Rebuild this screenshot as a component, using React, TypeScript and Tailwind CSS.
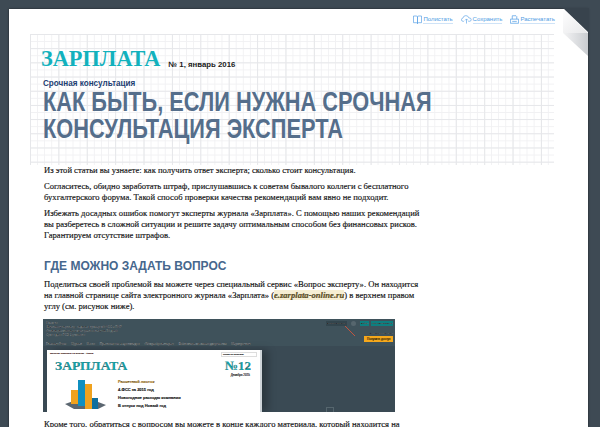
const serif = "font-['Liberation_Serif',serif]";

function BookIcon() {
  return (
    <svg width="9" height="9" viewBox="0 0 9 9" fill="none" stroke="#5aa2e6" strokeWidth="0.7">
      <path d="M0.5 1h2.800q1.200 0 1.200 1v6.500q0-.8-1.200-.8h-2.800zM8.500 1h-2.800q-1.200 0-1.200 1v6.500q0-.8 1.200-.8h2.800z" />
    </svg>
  );
}

function CloudIcon() {
  return (
    <svg width="11" height="9" viewBox="0 0 15 12" fill="none" stroke="#5aa2e6" strokeWidth="0.9">
      <path d="M4 8.500h-1q-2.400 0-2.400-2.200 0-2 2-2.200 0.600-3.400 4-3.400 3.200 0 4 3 3.300 0 3.300 2.500 0 2.300-2.400 2.300h-1.500" />
      <path d="M7.500 11.500v-6M5.500 7.200l2-2 2 2" />
    </svg>
  );
}

function PrintIcon() {
  return (
    <svg width="9" height="9" viewBox="0 0 12 12" fill="none" stroke="#5aa2e6" strokeWidth="1">
      <path d="M3 5.500v-4.500h5l1 1v3.500M0.500 5.500h11v5.500h-11zM3 8.500h6" />
    </svg>
  );
}

function ToolLink({ icon, label }: { icon: React.ReactNode; label: string }) {
  return (
    <div className="flex items-center gap-[1px]">
      {icon}
      <span className="border-b border-[#cfe3f7] text-[6px] leading-[8px] text-[#4f9be3]">{label}</span>
    </div>
  );
}

function Chart() {
  return (
    <svg width="41" height="30" viewBox="0 0 41 30" className="shrink-0">
      <path d="M0 25l20-7 21 8-8 4h-24z" fill="#5b6670" />
      <rect x="6" y="11" width="7" height="14" fill="#f0a21e" />
      <rect x="13" y="1" width="7" height="26" fill="#0f8fc0" />
      <rect x="20" y="5" width="7" height="25" fill="#f0a21e" />
      <rect x="27" y="19" width="6" height="11" fill="#0f6f9e" />
    </svg>
  );
}

function Screenshot() {
  return (
    <div className="relative mt-[7px] h-[93px] w-[352px] overflow-hidden bg-[#3a4a54] font-['Liberation_Sans',sans-serif] text-[#cfd8dc]">
      <div className="flex h-[27px] justify-between bg-[#3f525b] pl-[3px] pr-[2px] pt-[2px]">
        <div className="text-[3px] leading-[4px]">
          <p>Новости</p>
          <p>Заявления зарплату - задача с проверкой ФСС в ПФР</p>
          <p>Оплата работникам может увеличиться на 30 дней</p>
          <p>Срок сдачи РСВ-1 уточнили</p>
          <div className="mt-[5px] flex gap-[5px] text-[#e3e8ea]">
            <span>Главная Ожив</span>
            <span>Журнал</span>
            <span>Книги</span>
            <span>Практические энциклопедии</span>
            <span>Обзоры бухгалтерам</span>
            <span>Библиотека основных документов</span>
            <span>Мероприятия</span>
          </div>
        </div>
        <div className="flex flex-col items-end">
          <div className="flex items-center gap-[2px] text-[2.500px] leading-[5px]">
            <span className="mr-[2px] bg-[#33454d] px-[1px]">Вопрос эксперту</span>
            <span className="mr-[2px] size-[5px] rounded-full bg-[#56666e]" />
            <span className="bg-[#0e7f80] px-[1px]">Войти</span>
            <span className="bg-[#0e7f80] px-[1px]">Моя регистрация</span>
          </div>
          <span className="mt-[6px] text-[2.500px] leading-[3px]">Активация подписки</span>
          <span className="mt-[1px] w-[29px] bg-[#f5a81c] pl-[3px] text-[3px] leading-[6px] text-[#5b3d00]">Получить доступ</span>
        </div>
      </div>
      <div className="ml-[4px] mt-[4px] flex h-[62px] w-[215px] flex-col border-r-[2px] border-[#cfd5d9] bg-white text-[#333] shadow-[6px_0_8px_rgba(0,0,0,0.25)]">
        <div className="flex justify-between px-[3px] pt-[2px] text-[2.500px] leading-[4px]">
          <span className="text-[#d9534f]">Срочная подписка на журнал · Архив</span>
          <span className="w-[36px] border border-[#ddd] pl-px leading-[3px]">Поиск по журналу</span>
        </div>
        <div className="mt-[1px] flex justify-between pl-[8px] pr-[9px]">
          <span className={`${serif} text-[13.500px] font-bold leading-[15px] text-[#16a6ac]`}>ЗАРПЛАТА</span>
          <span className={`${serif} text-[13px] font-bold leading-[15px] text-[#16a6ac]`}>№12</span>
        </div>
        <div className="flex">
          <div className="ml-[18px] mt-[6px]">
            <Chart />
          </div>
          <div className="ml-[12px] mt-[5px] text-[4px] font-bold leading-[8px] text-[#222]">
            <p className="text-[#e0a126]">Расчетный листок</p>
            <p>4-ФСС за 2015 год</p>
            <p>Новогодние расходы компании</p>
            <p>В отпуск под Новый год</p>
          </div>
          <span className="ml-auto pr-[10px] text-[3px] leading-[4px]">Декабрь 2015</span>
        </div>
      </div>
      {/* стрелка к кнопке */}
      <svg width="12" height="12" viewBox="0 0 12 12" className="absolute left-[301px] top-[6px]">
        <path d="M1 1l10 10" stroke="#c0553f" strokeWidth="1" />
      </svg>
      <div className="absolute bottom-0 left-[283px] h-[5px] w-[8px] border border-b-0 border-[#56666e]" />
    </div>
  );
}

export default function App() {
  return (
    <div className="h-[427px] w-[600px] overflow-hidden bg-[#3e4a54] pl-[9px] pt-[9px]">
      <div className="relative h-[418px] w-[579px] bg-white shadow-[0_0_2px_rgba(0,0,0,0.6)]">
        {/* загнутый угол */}
        <svg width="27" height="50" viewBox="0 0 27 50" className="absolute -right-px -top-px">
          <defs>
            <linearGradient id="fold" x1="0" y1="0" x2="1" y2="1">
              <stop offset="0" stopColor="#ffffff" />
              <stop offset="1" stopColor="#e6e7e9" />
            </linearGradient>
            <linearGradient id="foldShadow" x1="0" y1="0" x2="1" y2="0">
              <stop offset="0" stopColor="#f4f4f5" />
              <stop offset="1" stopColor="#c9ccd0" />
            </linearGradient>
          </defs>
          <path d="M1 0h26v25z" fill="#38434d" />
          <path d="M1 1l25 24h-25z" fill="url(#fold)" />
          <path d="M1 25h25v23z" fill="url(#foldShadow)" />
        </svg>

        <div className="flex justify-end gap-[8px] pr-[33px] pt-[6px] font-['Liberation_Sans',sans-serif]">
          <ToolLink icon={<BookIcon />} label="Полистать" />
          <ToolLink icon={<CloudIcon />} label="Сохранить" />
          <ToolLink icon={<PrintIcon />} label="Распечатать" />
        </div>

        <div className="ml-[21px] mt-[10px] h-[131px] w-[524px] overflow-hidden bg-[linear-gradient(#e6e7ea_1px,transparent_1px),linear-gradient(90deg,#e6e7ea_1px,transparent_1px),linear-gradient(#f1f1f3_1px,transparent_1px),linear-gradient(90deg,#f1f1f3_1px,transparent_1px)] bg-[length:28.4px_14.2px,28.4px_14.2px,7.1px_7.1px,7.1px_7.1px] pl-[11px] pt-[14px] font-['Liberation_Sans',sans-serif]">
          <div className="flex items-end gap-[8px]">
            <span className={`${serif} text-[22.300px] font-bold leading-[22px] text-[#12b1bd]`}>ЗАРПЛАТА</span>
            <span className="text-[7.800px] font-bold leading-[10px] text-[#1a1a1a]">№ 1, январь 2016</span>
          </div>
          <p className="ml-[2px] mt-[8px] text-[8.150px] font-bold leading-[11px] text-[#1d3e72]">Срочная консультация</p>
          <h1 className="ml-[2px] w-max origin-left scale-x-[0.806] text-[27px] font-bold uppercase leading-[27px] text-[#556e8b]">
            Как быть, если нужна срочная
            <br />
            консультация эксперта
          </h1>
        </div>

        <div className={`ml-[35px] w-[378px] ${serif} text-[8.600px] leading-[11px] text-[#111] [-webkit-text-stroke:0.15px_#111]`}>
          <p>Из этой статьи вы узнаете: как получить ответ эксперта; сколько стоит консультация.</p>
          <p className="mt-[5px]">Согласитесь, обидно заработать штраф, прислушавшись к советам бывалого коллеги с бесплатного бухгалтерского форума. Такой способ проверки качества рекомендаций вам явно не подходит.</p>
          <p className="mt-[5px]">Избежать досадных ошибок помогут эксперты журнала «Зарплата». С помощью наших рекомендаций вы разберетесь в сложной ситуации и решите задачу оптимальным способом без финансовых рисков. Гарантируем отсутствие штрафов.</p>
          <h2 className="mt-[18px] font-['Liberation_Sans',sans-serif] text-[12px] font-bold uppercase leading-[14px] text-[#46678d] [-webkit-text-stroke:0]">Где можно задать вопрос</h2>
          <p className="mt-[6px]">Поделиться своей проблемой вы можете через специальный сервис «Вопрос эксперту». Он находится на главной странице сайта электронного журнала «Зарплата» (<span className="bg-[#f6eed3] font-bold italic text-[#6d5a1e]">e.zarplata-online.ru</span>) в верхнем правом углу (см. рисунок ниже).</p>
          <div className="-ml-px">
            <Screenshot />
          </div>
          <p className="mt-[7px]">Кроме того, обратиться с вопросом вы можете в конце каждого материала, который находится на</p>
        </div>
      </div>
    </div>
  );
}
